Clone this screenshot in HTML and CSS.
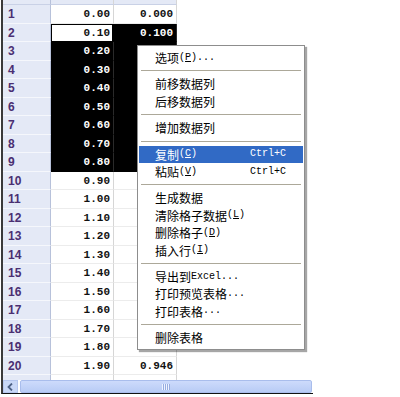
FILE: index.html
```html
<!DOCTYPE html>
<html lang="zh">
<head>
    <meta charset="UTF-8">
    <title>数据表格</title>
    <link rel="stylesheet" href="styles.css">
</head>
<body>
    <div class="sheet">
        <div class="grid">
            <div class="row top"><div class="rh"></div><div class="cell"></div><div class="cell"></div></div>
            <div class="row"><div class="rh">1</div><div class="cell">0.00</div><div class="cell">0.000</div></div>
            <div class="row"><div class="rh">2</div><div class="cell active">0.10</div><div class="cell sel">0.100</div></div>
            <div class="row"><div class="rh">3</div><div class="cell sel">0.20</div><div class="cell sel">0.199</div></div>
            <div class="row"><div class="rh">4</div><div class="cell sel">0.30</div><div class="cell sel">0.296</div></div>
            <div class="row"><div class="rh">5</div><div class="cell sel">0.40</div><div class="cell sel">0.389</div></div>
            <div class="row"><div class="rh">6</div><div class="cell sel">0.50</div><div class="cell sel">0.479</div></div>
            <div class="row"><div class="rh">7</div><div class="cell sel">0.60</div><div class="cell sel">0.565</div></div>
            <div class="row"><div class="rh">8</div><div class="cell sel">0.70</div><div class="cell sel">0.644</div></div>
            <div class="row"><div class="rh">9</div><div class="cell sel">0.80</div><div class="cell sel">0.717</div></div>
            <div class="row"><div class="rh">10</div><div class="cell">0.90</div><div class="cell">0.783</div></div>
            <div class="row"><div class="rh">11</div><div class="cell">1.00</div><div class="cell">0.841</div></div>
            <div class="row"><div class="rh">12</div><div class="cell">1.10</div><div class="cell">0.891</div></div>
            <div class="row"><div class="rh">13</div><div class="cell">1.20</div><div class="cell">0.932</div></div>
            <div class="row"><div class="rh">14</div><div class="cell">1.30</div><div class="cell">0.964</div></div>
            <div class="row"><div class="rh">15</div><div class="cell">1.40</div><div class="cell">0.985</div></div>
            <div class="row"><div class="rh">16</div><div class="cell">1.50</div><div class="cell">0.997</div></div>
            <div class="row"><div class="rh">17</div><div class="cell">1.60</div><div class="cell">1.000</div></div>
            <div class="row"><div class="rh">18</div><div class="cell">1.70</div><div class="cell">0.992</div></div>
            <div class="row"><div class="rh">19</div><div class="cell">1.80</div><div class="cell">0.974</div></div>
            <div class="row"><div class="rh">20</div><div class="cell">1.90</div><div class="cell">0.946</div></div>
            <div class="row"><div class="rh"></div><div class="cell"></div><div class="cell"></div></div>
        </div>
        <div class="hscroll">
            <div class="arrow">
                <svg width="7" height="8" viewBox="0 0 7 8"><path d="M5 0.5 L1.5 4 L5 7.5" fill="none" stroke="#4d6185" stroke-width="1.8"/></svg>
            </div>
            <div class="thumb"><span class="grip"></span></div>
        </div>
    </div>

    <div class="menu">
        <div class="item">选项<span class="en">(<u>P</u>)...</span></div>
        <div class="sep"></div>
        <div class="item">前移数据列</div>
        <div class="item">后移数据列</div>
        <div class="sep"></div>
        <div class="item">增加数据列</div>
        <div class="sep"></div>
        <div class="item hover">复制<span class="en">(<u>C</u>)</span><span class="key">Ctrl+C</span></div>
        <div class="item">粘贴<span class="en">(<u>V</u>)</span><span class="key">Ctrl+C</span></div>
        <div class="sep"></div>
        <div class="item">生成数据</div>
        <div class="item">清除格子数据<span class="en">(<u>L</u>)</span></div>
        <div class="item">删除格子<span class="en">(<u>D</u>)</span></div>
        <div class="item">插入行<span class="en">(<u>I</u>)</span></div>
        <div class="sep"></div>
        <div class="item">导出到<span class="en">Excel...</span></div>
        <div class="item">打印预览表格<span class="en">...</span></div>
        <div class="item">打印表格<span class="en">...</span></div>
        <div class="sep"></div>
        <div class="item">删除表格</div>
    </div>
</body>
</html>
```

FILE: styles.css
```css
body {
    margin: 0;
    background: #fff;
    font-family: "Liberation Sans", "Noto Sans CJK SC", sans-serif;
}

.sheet {
    margin-left: 1px;
    width: 312px;
    height: 394px;
    box-sizing: border-box;
    border-left: 2px solid #3a3a3a;
    border-bottom: 1px solid #111;
    display: flex;
    flex-direction: column;
}

.grid {
    height: 380px;
    overflow: hidden;
}

.row {
    display: flex;
    height: 18.5px;
    box-sizing: border-box;
}

.row.top {
    height: 5px;
}

.rh {
    width: 48px;
    flex: none;
    background: #e4e9f6;
    border-right: 1px solid #b7c1da;
    border-bottom: 1px solid #f5f7fc;
    padding-left: 5px;
    box-sizing: border-box;
    color: #4a2f72;
    font-weight: bold;
    font-size: 12px;
    line-height: 18px;
}

.cell {
    width: 63px;
    flex: none;
    box-sizing: border-box;
    border-right: 1px solid #d6d6d6;
    border-bottom: 1px solid #ececec;
    padding-right: 3px;
    text-align: right;
    font-family: "Liberation Mono", monospace;
    font-weight: bold;
    font-size: 11px;
    line-height: 18px;
    color: #111;
}

.top .cell {
    background: #e4e9f6;
    border-bottom: 1px solid #c9d1e6;
}

.top .rh {
    border-bottom: 1px solid #c9d1e6;
}

.cell.sel {
    background: #000;
    color: #fff;
    border-right-color: #2a2a2a;
    border-bottom-color: #000;
}

.cell.active {
    background: #fff;
    border: 1px solid #000;
    border-right-width: 2px;
    padding-right: 2px;
    line-height: 16px;
}

.hscroll {
    flex: none;
    height: 13px;
    display: flex;
    gap: 2px;
    margin-right: 1px;
}

.arrow {
    width: 15px;
    background: #c9d8f7;
    border: 1px solid #b6c7ee;
    box-sizing: border-box;
    display: flex;
    align-items: center;
    justify-content: center;
}

.thumb {
    flex: 1;
    background: linear-gradient(#cddbfb, #b8cbf5);
    border: 1px solid #a9bdec;
    border-radius: 2px;
    display: flex;
    align-items: center;
    justify-content: center;
}

.grip {
    width: 8px;
    height: 6px;
    background: repeating-linear-gradient(90deg, #eef3ff 0 1px, #98ade0 1px 2px);
}

.menu {
    position: absolute;
    left: 137px;
    top: 45px;
    width: 168px;
    box-sizing: border-box;
    padding: 3px 1px;
    background: #fff;
    border: 1px solid #8d8d8d;
    box-shadow: 2px 2px 1px rgba(0, 0, 0, 0.35);
    font-family: "Noto Sans CJK SC", sans-serif;
    font-size: 12px;
    color: #000;
}

.item {
    height: 17.4px;
    line-height: 17.4px;
    padding-left: 16px;
    display: flex;
    align-items: center;
    white-space: nowrap;
    overflow: hidden;
}

.item.hover {
    background: #316ac5;
    color: #fff;
}

.en {
    font-family: "Liberation Mono", monospace;
    font-size: 10px;
    line-height: 12px;
}

.key {
    margin-left: auto;
    margin-right: 17px;
    font-family: "Liberation Mono", monospace;
    font-size: 10px;
    line-height: 12px;
}

.sep {
    height: 9px;
    margin: 0 2px;
    display: flex;
    align-items: center;
}

.sep::before {
    content: '';
    flex: 1;
    height: 1px;
    background: #aca899;
}
```
